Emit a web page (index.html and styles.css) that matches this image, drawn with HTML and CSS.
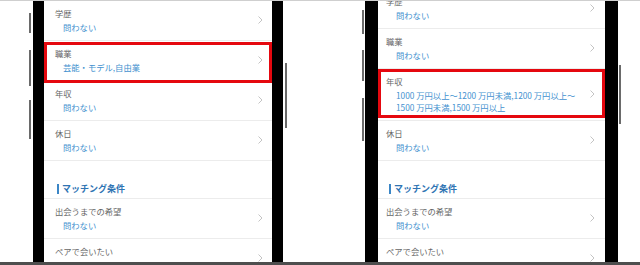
FILE: index.html
```html
<!DOCTYPE html>
<html lang="ja">
<head>
<meta charset="utf-8">
<link rel="stylesheet" href="styles.css">
</head>
<body>
<div class="frame">
  <div class="panel panel--a">
    <div class="phone phone--a">
      <span class="btn btn-l1"></span><span class="btn btn-l2"></span><span class="btn btn-l3"></span><span class="btn btn-r1"></span>
      <div class="screen">
        <div class="list">
          <div class="row"><div class="txt"><div class="label">学歴</div><div class="value">問わない</div></div><svg class="chev" viewBox="0 0 5 8"><polyline points="0.5,0.5 4,4 0.5,7.5"/></svg></div>
          <div class="row hl hl--a"><div class="txt"><div class="label">職業</div><div class="value">芸能・モデル,自由業</div></div><svg class="chev" viewBox="0 0 5 8"><polyline points="0.5,0.5 4,4 0.5,7.5"/></svg></div>
          <div class="row"><div class="txt"><div class="label">年収</div><div class="value">問わない</div></div><svg class="chev" viewBox="0 0 5 8"><polyline points="0.5,0.5 4,4 0.5,7.5"/></svg></div>
          <div class="row"><div class="txt"><div class="label">休日</div><div class="value">問わない</div></div><svg class="chev" viewBox="0 0 5 8"><polyline points="0.5,0.5 4,4 0.5,7.5"/></svg></div>
          <div class="head"><span class="head-t">マッチング条件</span></div>
          <div class="row"><div class="txt"><div class="label">出会うまでの希望</div><div class="value">問わない</div></div><svg class="chev" viewBox="0 0 5 8"><polyline points="0.5,0.5 4,4 0.5,7.5"/></svg></div>
          <div class="row"><div class="txt"><div class="label">ペアで会いたい</div><div class="value">問わない</div></div><svg class="chev" viewBox="0 0 5 8"><polyline points="0.5,0.5 4,4 0.5,7.5"/></svg></div>
        </div>
      </div>
    </div>
  </div>
  <div class="panel panel--b">
    <div class="phone phone--b">
      <span class="btn btn-l1"></span><span class="btn btn-l2"></span><span class="btn btn-l3"></span><span class="btn btn-r1"></span>
      <div class="screen">
        <div class="list list--b">
          <div class="row"><div class="txt"><div class="label">学歴</div><div class="value">問わない</div></div><svg class="chev" viewBox="0 0 5 8"><polyline points="0.5,0.5 4,4 0.5,7.5"/></svg></div>
          <div class="row"><div class="txt"><div class="label">職業</div><div class="value">問わない</div></div><svg class="chev" viewBox="0 0 5 8"><polyline points="0.5,0.5 4,4 0.5,7.5"/></svg></div>
          <div class="row hl hl--b"><div class="txt"><div class="label">年収</div><div class="value">1000 万円以上～1200 万円未満,1200 万円以上～<br>1500 万円未満,1500 万円以上</div></div><svg class="chev" viewBox="0 0 5 8"><polyline points="0.5,0.5 4,4 0.5,7.5"/></svg></div>
          <div class="row"><div class="txt"><div class="label">休日</div><div class="value">問わない</div></div><svg class="chev" viewBox="0 0 5 8"><polyline points="0.5,0.5 4,4 0.5,7.5"/></svg></div>
          <div class="head"><span class="head-t">マッチング条件</span></div>
          <div class="row"><div class="txt"><div class="label">出会うまでの希望</div><div class="value">問わない</div></div><svg class="chev" viewBox="0 0 5 8"><polyline points="0.5,0.5 4,4 0.5,7.5"/></svg></div>
          <div class="row"><div class="txt"><div class="label">ペアで会いたい</div><div class="value">問わない</div></div><svg class="chev" viewBox="0 0 5 8"><polyline points="0.5,0.5 4,4 0.5,7.5"/></svg></div>
        </div>
      </div>
    </div>
  </div>
</div>
</body>
</html>
```
FILE: styles.css
```css
* { box-sizing: border-box; }
html, body { margin: 0; padding: 0; background: #fff; }
body { font-family: "Noto Sans CJK JP", "Noto Sans", sans-serif; }

.frame {
  width: 640px;
  height: 265px;
  display: flex;
  overflow: hidden;
  border-top: 1px solid #cfcfcf;
  border-bottom: 3px solid #4e4e4e;
  background: #fff;
}

.panel { width: 320px; height: 100%; flex: none; }
.panel--a { padding-left: 33px; }
.panel--b { padding-left: 45px; }

.phone {
  position: relative;
  height: 100%;
  background: #000;
}
.phone--a { width: 250px; padding: 0 11px; }
.phone--b { width: 253px; padding: 0 13px; }

.btn {
  position: absolute;
  width: 2px;
  background: #6a6a6a;
}
.phone--a .btn-l1 { left: -4px; top: 12px; height: 20px; }
.phone--a .btn-l2 { left: -4px; top: 49px; height: 36px; }
.phone--a .btn-l3 { left: -4px; top: 99px; height: 39px; }
.phone--a .btn-r1 { right: -4px; top: 62px; height: 65px; }
.phone--b .btn-l1 { left: -3px; top: 9px; height: 24px; }
.phone--b .btn-l2 { left: -3px; top: 49px; height: 31px; }
.phone--b .btn-l3 { left: -3px; top: 97px; height: 43px; }
.phone--b .btn-r1 { right: -3px; top: 64px; height: 59px; }

.screen {
  height: 100%;
  background: #fff;
  overflow: hidden;
}

.list--b { margin-top: -12px; }

.row {
  position: relative;
  display: flex;
  align-items: center;
  min-height: 40px;
  padding: 6px 9px 7px 11px;
  border-bottom: 1px solid #ececec;
}
.phone--b .row { padding-left: 8px; padding-right: 10px; }

.txt { flex: 1; min-width: 0; }
.label {
  font-size: 8.3px;
  line-height: 12px;
  color: #666;
}
.value {
  font-size: 8.3px;
  line-height: 12px;
  color: #4391cf;
  margin-top: 2px;
  padding-left: 8px;
  white-space: nowrap;
}
.phone--b .value { padding-left: 10px; }

.chev {
  width: 5px;
  height: 8px;
  flex: none;
  fill: none;
  stroke: #c4c4c4;
  stroke-width: 1;
}

.hl::after {
  content: "";
  position: absolute;
  border: 3px solid #e5080f;
}
.hl--a::after { top: 1px; bottom: -3px; left: 0; right: 0; }
.hl--b::after { top: 0; bottom: 2px; left: 0; right: 0; }

.head {
  padding: 18px 0 4px 13px;
  border-bottom: 1px solid #ececec;
  line-height: 12px;
}
.phone--b .head { padding-left: 11px; }
.head-t {
  display: inline-block;
  border-left: 2px solid #3b86c6;
  padding-left: 3px;
  font-size: 9px;
  line-height: 10px;
  font-weight: 700;
  color: #2f74b3;
}
```
